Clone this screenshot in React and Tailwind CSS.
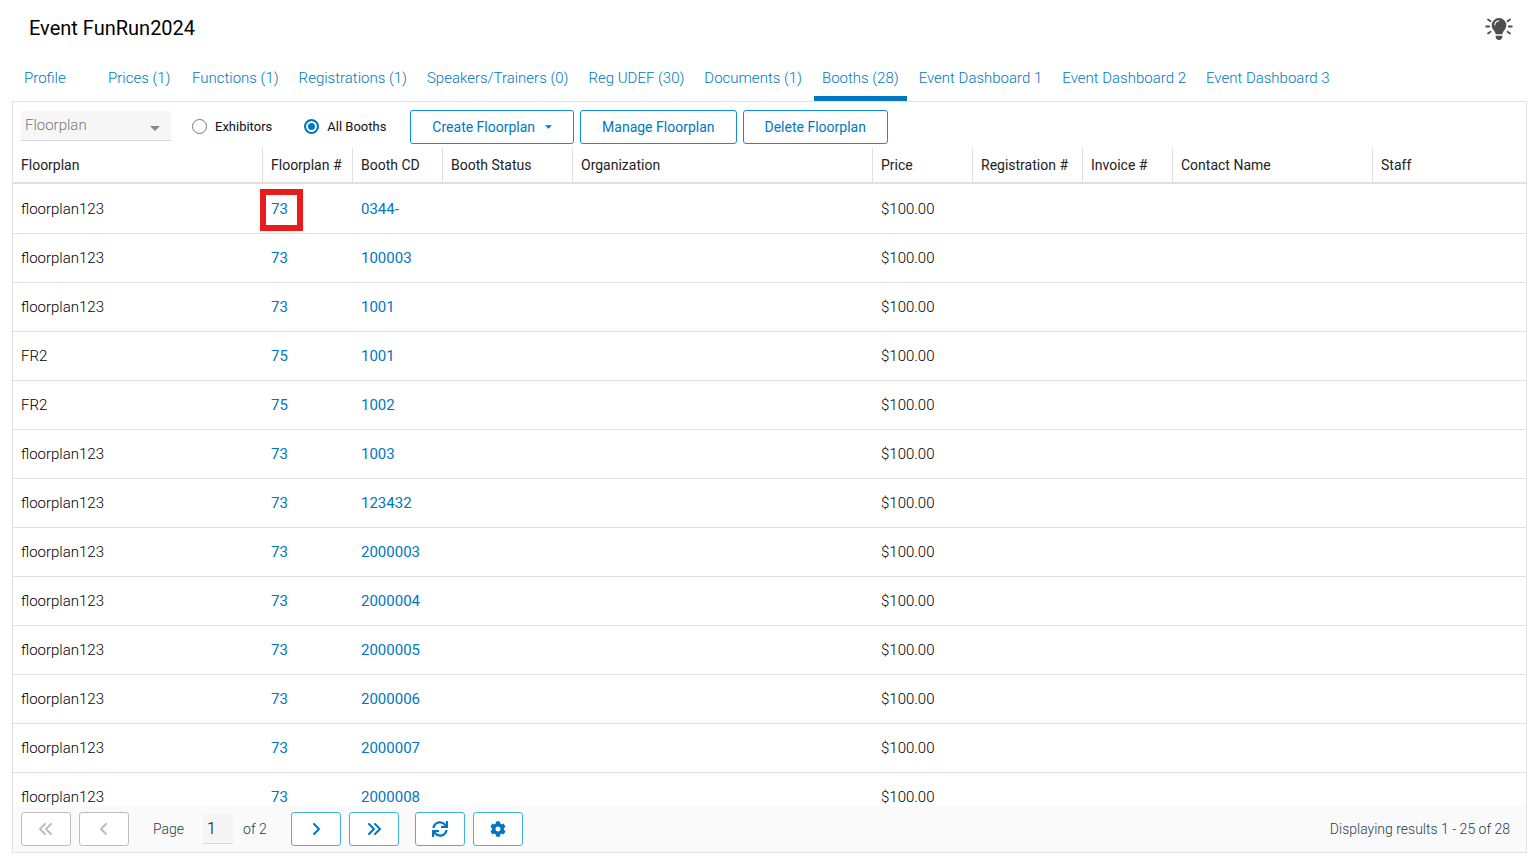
import { FaCog, FaSync } from "react-icons/fa";
import { FaAngleLeft, FaAngleRight, FaAnglesLeft, FaAnglesRight } from "react-icons/fa6";

const tabs = [
  "Profile",
  "Prices (1)",
  "Functions (1)",
  "Registrations (1)",
  "Speakers/Trainers (0)",
  "Reg UDEF (30)",
  "Documents (1)",
  "Booths (28)",
  "Event Dashboard 1",
  "Event Dashboard 2",
  "Event Dashboard 3",
];

const columns = [
  { label: "Floorplan", width: "w-[250px]" },
  { label: "Floorplan #", width: "w-[90px]" },
  { label: "Booth CD", width: "w-[90px]" },
  { label: "Booth Status", width: "w-[130px]" },
  { label: "Organization", width: "w-[300px]" },
  { label: "Price", width: "w-[100px]" },
  { label: "Registration #", width: "w-[110px]" },
  { label: "Invoice #", width: "w-[90px]" },
  { label: "Contact Name", width: "w-[200px]" },
  { label: "Staff", width: "" },
];

const booths = [
  { plan: "floorplan123", number: 73, cd: "0344-", highlight: true },
  { plan: "floorplan123", number: 73, cd: "100003" },
  { plan: "floorplan123", number: 73, cd: "1001" },
  { plan: "FR2", number: 75, cd: "1001" },
  { plan: "FR2", number: 75, cd: "1002" },
  { plan: "floorplan123", number: 73, cd: "1003" },
  { plan: "floorplan123", number: 73, cd: "123432" },
  { plan: "floorplan123", number: 73, cd: "2000003" },
  { plan: "floorplan123", number: 73, cd: "2000004" },
  { plan: "floorplan123", number: 73, cd: "2000005" },
  { plan: "floorplan123", number: 73, cd: "2000006" },
  { plan: "floorplan123", number: 73, cd: "2000007" },
  { plan: "floorplan123", number: 73, cd: "2000008" },
];

function BulbIcon() {
  return (
    <svg width="28" height="24" viewBox="0 0 28 24" fill="none" aria-hidden="true">
      <path
        d="M14 1a7.300 7.300 0 0 0-7.300 7.300c0 2.200.9 3.600 2 4.900 1.100 1.400 1.700 2.400 2 4.100h6.600c.3-1.700.9-2.700 2-4.100 1.100-1.300 2-2.700 2-4.900A7.300 7.300 0 0 0 14 1Z"
        fill="#4d4d4d"
      />
      <path d="M10.700 18.800h6.600v1.200c0 1.500-1.300 3-3.300 3s-3.300-1.500-3.300-3Z" fill="#4d4d4d" />
      <path d="M9.800 8c.1-2.200 1.700-3.900 4-4.100" stroke="#fff" strokeWidth="1.100" strokeLinecap="round" />
      <path
        d="M1.200 9.500h3M23.800 9.500h3M3 2.500l2.500 1.700M25 2.500l-2.500 1.700M3 16.500l2.500-1.700M25 16.500l-2.500-1.700"
        stroke="#4d4d4d"
        strokeWidth="1.800"
        strokeLinecap="round"
      />
    </svg>
  );
}

function Caret({ className }) {
  return (
    <svg viewBox="0 0 10 5" className={className} fill="currentColor" aria-hidden="true">
      <path d="M0 0h10L5 5Z" />
    </svg>
  );
}

function RadioOption({ label, ...props }) {
  return (
    <label className="flex items-center gap-2 text-[13px] text-[#111]">
      <input
        type="radio"
        name="boothFilter"
        className="mb-[2px] size-[15px] appearance-none rounded-full border border-[#777] bg-white checked:border-2 checked:border-[#0077c0] checked:bg-[#0077c0] checked:shadow-[inset_0_0_0_2px_#fff]"
        {...props}
      />
      {label}
    </label>
  );
}

function ToolbarButton({ children }) {
  return (
    <button
      type="button"
      className="flex h-[34px] items-center rounded-[3px] border border-[#0e8fd6] bg-white px-[21px] text-sm text-[#0077c0]"
    >
      {children}
    </button>
  );
}

function PagerButton({ label, disabled, children }) {
  return (
    <button
      type="button"
      aria-label={label}
      disabled={disabled}
      className="flex h-[34px] w-[50px] items-center justify-center rounded-[3px] border border-[#40b4e5] bg-white text-base text-[#0077c0] disabled:border-[#bdbdbd] disabled:text-[#bdbdbd]"
    >
      {children}
    </button>
  );
}

export default function App() {
  return (
    <div className="flex h-screen flex-col bg-white px-3 pr-[7px] pb-[7px] font-[Roboto,sans-serif] text-[15px] text-[#222]">
      <header className="flex h-14 items-center justify-between pr-[14px] pl-[17px]">
        <h1 className="text-xl text-black">Event FunRun2024</h1>
        <button type="button" aria-label="Tips" className="pt-[2px]">
          <BulbIcon />
        </button>
      </header>

      <nav className="flex h-[45px] gap-1 pl-1">
        {tabs.map((tab) => (
          <a
            key={tab}
            href="#"
            className={`min-w-20 border-b-5 px-2 pt-[10px] leading-6 font-light text-[#0077c0] ${
              tab === "Booths (28)" ? "border-[#0077c0]" : "border-transparent"
            }`}
          >
            {tab}
          </a>
        ))}
      </nav>

      <main className="flex min-h-0 flex-1 flex-col border border-[#e2e2e2]">
        <div className="flex h-[46px] shrink-0 items-center px-2 pt-1">
          <div className="relative mr-[21px] pb-[2px]">
            <select
              aria-label="Floorplan"
              className="block h-[30px] w-[150px] appearance-none border-b border-[#d6d6d6] bg-[#f6f6f6] px-1 font-light text-[#777]"
            >
              <option>Floorplan</option>
            </select>
            <Caret className="pointer-events-none absolute top-[15px] right-[11px] h-[5px] w-[10px] text-[#888]" />
          </div>
          <div className="mr-6 flex gap-8">
            <RadioOption label="Exhibitors" />
            <RadioOption label="All Booths" defaultChecked />
          </div>
          <div className="flex gap-[6px]">
            <ToolbarButton>
              Create Floorplan
              <Caret className="ml-[10px] h-[4px] w-[7px]" />
            </ToolbarButton>
            <ToolbarButton>Manage Floorplan</ToolbarButton>
            <ToolbarButton>Delete Floorplan</ToolbarButton>
          </div>
        </div>

        <div className="min-h-0 flex-1 overflow-hidden">
          <table className="w-full table-fixed border-separate border-spacing-0 text-left">
            <thead>
              <tr className="h-9">
                {columns.map((col) => (
                  <th
                    key={col.label}
                    className={`${col.width} border-r border-b-2 border-[#e0e0e0] px-2 text-sm font-normal whitespace-nowrap last:border-r-0`}
                  >
                    {col.label}
                  </th>
                ))}
              </tr>
            </thead>
            <tbody>
              {booths.map((booth) => (
                <tr
                  key={booth.cd + booth.plan}
                  className="h-[49px] first:h-[50px] [&>td]:border-b [&>td]:border-[#e0e0e0] [&>td]:px-2 [&:first-child>td]:pt-[2px]"
                >
                  <td className="font-light text-black">{booth.plan}</td>
                  <td className="relative">
                    <a href="#" className="text-[#0077c0]">{booth.number}</a>
                    {booth.highlight && (
                      <span className="pointer-events-none absolute top-[5px] -left-[3px] h-[42px] w-[43px] border-6 border-[#e81c1c]" />
                    )}
                  </td>
                  <td>
                    <a href="#" className="text-[#0077c0]">{booth.cd}</a>
                  </td>
                  <td />
                  <td />
                  <td className="font-light text-black">$100.00</td>
                  <td />
                  <td />
                  <td />
                  <td />
                </tr>
              ))}
            </tbody>
          </table>
        </div>

        <footer className="flex h-[46px] shrink-0 items-center justify-between bg-[#fafafa] px-2 text-sm font-light text-[#263f4d]">
          <div className="flex items-center gap-2">
            <PagerButton label="First page" disabled>
              <FaAnglesLeft />
            </PagerButton>
            <PagerButton label="Previous page" disabled>
              <FaAngleLeft />
            </PagerButton>
            <label htmlFor="page" className="ml-4">Page</label>
            <input
              id="page"
              defaultValue="1"
              className="mr-[2px] ml-[11px] h-[30px] w-[30px] border-b border-[#d6d6d6] bg-[#f5f5f5] px-1 text-base font-light text-black"
            />
            <span className="mr-4">of 2</span>
            <PagerButton label="Next page">
              <FaAngleRight />
            </PagerButton>
            <PagerButton label="Last page">
              <FaAnglesRight />
            </PagerButton>
            <div className="ml-2 flex gap-2">
              <PagerButton label="Refresh">
                <FaSync />
              </PagerButton>
              <PagerButton label="Settings">
                <FaCog />
              </PagerButton>
            </div>
          </div>
          <p className="mr-2">Displaying results 1 - 25 of 28</p>
        </footer>
      </main>
    </div>
  );
}
